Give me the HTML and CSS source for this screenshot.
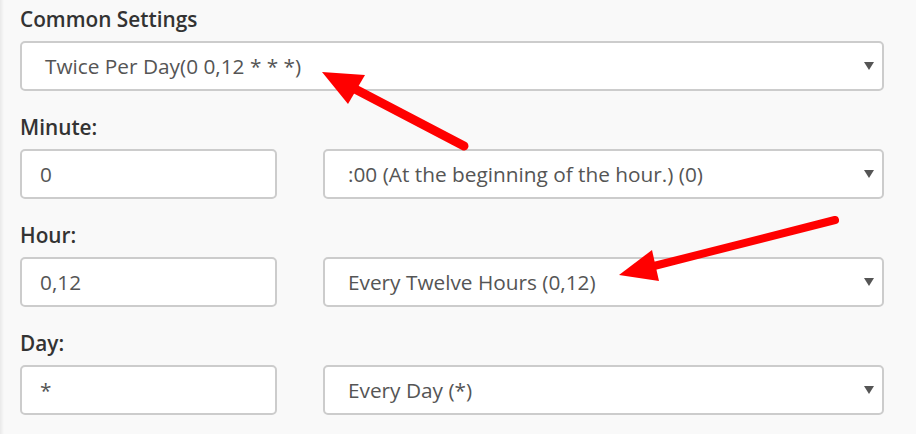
FILE: index.html
```html
<!DOCTYPE html>
<html>
<head>
<meta charset="utf-8">
<link rel="stylesheet" href="styles.css">
</head>
<body>
<div class="page">
  <div class="group">
    <div class="label">Common Settings</div>
    <div class="select wide"><span>Twice Per Day(0 0,12 * * *)</span><svg class="caret" width="10" height="8" viewBox="0 0 10 8"><path d="M0 0H10L5 8Z" fill="#555"/></svg></div>
  </div>
  <div class="group">
    <div class="label">Minute:</div>
    <div class="row">
      <div class="input">0</div>
      <div class="select"><span>:00 (At the beginning of the hour.) (0)</span><svg class="caret" width="10" height="8" viewBox="0 0 10 8"><path d="M0 0H10L5 8Z" fill="#555"/></svg></div>
    </div>
  </div>
  <div class="group">
    <div class="label">Hour:</div>
    <div class="row">
      <div class="input">0,12</div>
      <div class="select"><span>Every Twelve Hours (0,12)</span><svg class="caret" width="10" height="8" viewBox="0 0 10 8"><path d="M0 0H10L5 8Z" fill="#555"/></svg></div>
    </div>
  </div>
  <div class="group">
    <div class="label">Day:</div>
    <div class="row">
      <div class="input">*</div>
      <div class="select"><span>Every Day (*)</span><svg class="caret" width="10" height="8" viewBox="0 0 10 8"><path d="M0 0H10L5 8Z" fill="#555"/></svg></div>
    </div>
  </div>
</div>
<svg class="arrows" width="916" height="434" viewBox="0 0 916 434">
  <line x1="464" y1="146" x2="355" y2="89" stroke="#ff0000" stroke-width="9" stroke-linecap="round"/>
  <polygon points="322,72 365,75 348,104" fill="#ff0000"/>
  <line x1="835" y1="220" x2="654" y2="266" stroke="#ff0000" stroke-width="8" stroke-linecap="round"/>
  <polygon points="619,275 652,250 659,281" fill="#ff0000"/>
</svg>
</body>
</html>
```
FILE: styles.css
```css
html, body {
  margin: 0;
  padding: 0;
}
body {
  width: 916px;
  height: 434px;
  overflow: hidden;
  position: relative;
  background: linear-gradient(to right, #e9e9e9 0, #f9f9f9 4px) #f9f9f9;
  font-family: "Open Sans", "Liberation Sans", sans-serif;
}
.page {
  padding: 7px 32px 0 20px;
}
.group {
  margin-bottom: 24px;
}
.label {
  font-size: 20.8px;
  line-height: 24px;
  font-weight: 600;
  color: #333;
  margin-bottom: 10px;
}
.row {
  display: grid;
  grid-template-columns: 257px 1fr;
  column-gap: 46px;
}
.input, .select {
  box-sizing: border-box;
  height: 50px;
  background: #fff;
  border: 2px solid #cccccc;
  border-radius: 5px;
  font-size: 20.8px;
  color: #555;
  display: flex;
  align-items: center;
}
.input {
  padding-left: 18px;
}
.select {
  padding-left: 23px;
  padding-right: 8px;
  justify-content: space-between;
}
.caret {
  display: block;
}
.arrows {
  position: absolute;
  left: 0;
  top: 0;
  pointer-events: none;
}
```
